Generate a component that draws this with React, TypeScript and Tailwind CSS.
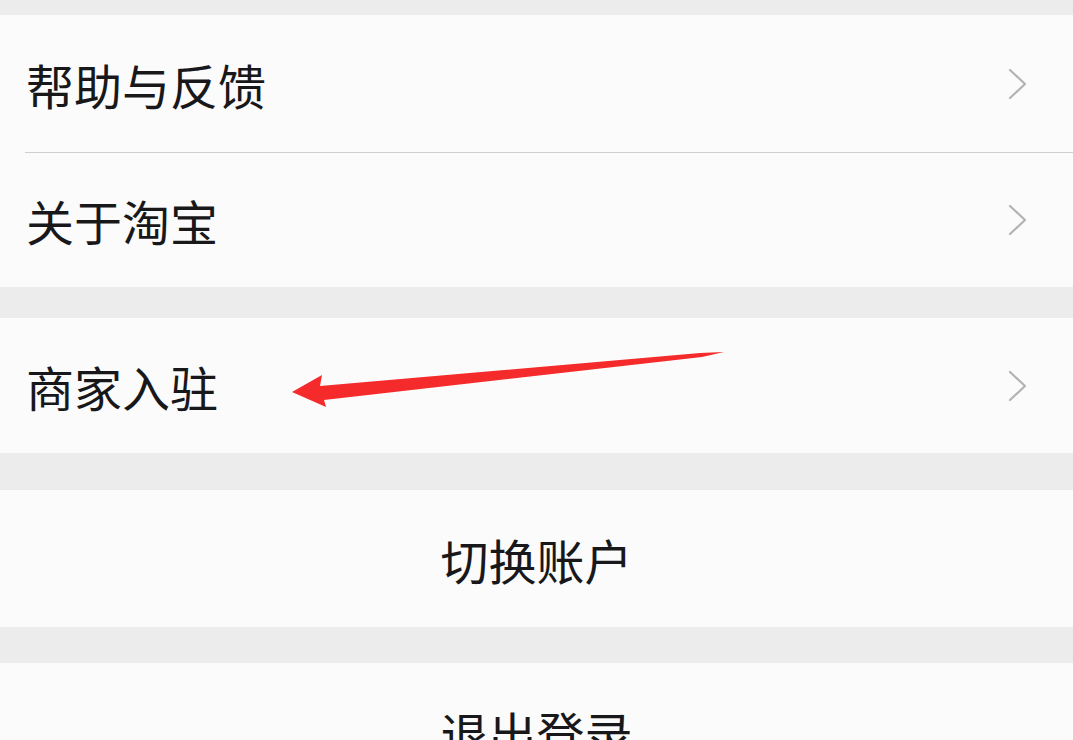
const font = { fontFamily: '"Noto Sans CJK SC", "Noto Sans", sans-serif' };

const Chevron = () => (
  <svg width="20" height="32" viewBox="0 0 20 32" className="shrink-0">
    <path d="M2 2 L17 16 L2 30" fill="none" stroke="#b3b3b3" strokeWidth="2.2" strokeLinecap="round" strokeLinejoin="round" />
  </svg>
);

// red annotation arrow drawn over the list
const Arrow = () => (
  <svg
    className="absolute left-0 top-0 pointer-events-none"
    width="1073"
    height="740"
    viewBox="0 0 1073 740"
  >
    <path
      d="M292 392 L322 375 L320 386 L700 353 L724 352 L702 357 L324 400 L326 407 Z"
      fill="#f52a2a"
    />
  </svg>
);

export default function App() {
  return (
    <div className="relative w-[1073px] h-[740px] overflow-hidden bg-[#ececec] text-[#18181a]" style={font}>
      <div className="h-[15px]" />
      <div className="bg-[#fbfbfb]">
        <div className="flex items-center justify-between h-[137px] pl-[26px] pr-[45px]">
          <span className="text-[48px] leading-none">帮助与反馈</span>
          <Chevron />
        </div>
        <div className="ml-[25px] h-px bg-[#cfcfcf]" />
        <div className="flex items-center justify-between h-[134px] pl-[26px] pr-[45px]">
          <span className="text-[48px] leading-none">关于淘宝</span>
          <Chevron />
        </div>
      </div>
      <div className="h-[31px]" />
      <div className="bg-[#fbfbfb] flex items-center justify-between h-[135px] pl-[26px] pr-[45px]">
        <span className="text-[48px] leading-none">商家入驻</span>
        <Chevron />
      </div>
      <div className="h-[37px]" />
      <div className="bg-[#fbfbfb] flex items-center justify-center h-[137px]">
        <span className="text-[48px] leading-none">切换账户</span>
      </div>
      <div className="h-[36px]" />
      <div className="bg-[#fbfbfb] flex items-center justify-center h-[137px]">
        <span className="text-[48px] leading-none">退出登录</span>
      </div>
      <Arrow />
    </div>
  );
}
